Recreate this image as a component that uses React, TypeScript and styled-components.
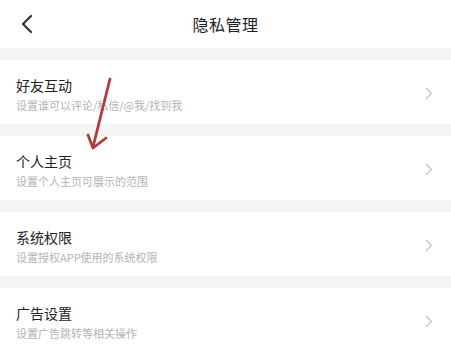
import React from 'react';
import styled, { createGlobalStyle } from 'styled-components';

const GlobalStyle = createGlobalStyle`
  html, body {
    margin: 0;
    padding: 0;
    background: #f5f5f5;
  }
  body {
    font-family: 'Noto Sans CJK SC', 'Noto Sans', sans-serif;
  }
`;

const Page = styled.div`
  position: relative;
  width: 451px;
  height: 347px;
  overflow: hidden;
  background: #f5f5f5;
`;

const Header = styled.header`
  height: 48px;
  background: #fff;
  display: grid;
  grid-template-columns: 60px 1fr 60px;
  align-items: center;
`;

const BackButton = styled.div`
  display: flex;
  align-items: center;
  padding-left: 20px;
  height: 48px;
`;

const Title = styled.h1`
  margin: 0;
  text-align: center;
  font-size: 16px;
  font-weight: 400;
  color: #222;
  letter-spacing: 0.5px;
`;

const List = styled.div`
  display: flex;
  flex-direction: column;
  gap: 12px;
  padding-top: 12px;
`;

const Item = styled.div`
  height: 64px;
  background: #fff;
  display: flex;
  align-items: flex-start;
  padding: 16px 16px 0 16px;
  box-sizing: border-box;
`;

const Texts = styled.div`
  flex: 1;
  display: flex;
  flex-direction: column;
`;

const ItemTitle = styled.div`
  font-size: 14px;
  line-height: 18px;
  color: #222;
`;

const ItemSub = styled.div`
  margin-top: 4px;
  font-size: 11px;
  line-height: 14px;
  color: #b4b4b4;
`;

const Chevron = styled.div`
  align-self: center;
  margin-top: -13px;
  margin-right: 2px;
  display: flex;
`;

const Annotation = styled.svg`
  position: absolute;
  left: 0;
  top: 0;
  pointer-events: none;
`;

const items = [
  { title: '好友互动', sub: '设置谁可以评论/私信/@我/找到我' },
  { title: '个人主页', sub: '设置个人主页可展示的范围' },
  { title: '系统权限', sub: '设置授权APP使用的系统权限' },
  { title: '广告设置', sub: '设置广告跳转等相关操作' },
];

const App = () => (
  <>
    <GlobalStyle />
    <Page>
      <Header>
        <BackButton>
          <svg width="14" height="20" viewBox="0 0 14 20">
            <path d="M11 2 L3 10 L11 18" fill="none" stroke="#333" strokeWidth="2.2" strokeLinecap="round" strokeLinejoin="round" />
          </svg>
        </BackButton>
        <Title>隐私管理</Title>
        <div />
      </Header>

      <List>
        {items.map((item) => (
          <Item key={item.title}>
            <Texts>
              <ItemTitle>{item.title}</ItemTitle>
              <ItemSub>{item.sub}</ItemSub>
            </Texts>
            <Chevron>
              <svg width="8" height="13" viewBox="0 0 8 13">
                <path d="M1.5 1.5 L6.5 6.5 L1.5 11.5" fill="none" stroke="#c2c2c2" strokeWidth="1.3" strokeLinecap="round" strokeLinejoin="round" />
              </svg>
            </Chevron>
          </Item>
        ))}
      </List>

      <Annotation width="451" height="347" viewBox="0 0 451 347">
        <g stroke="#b5383a" strokeWidth="2.8" strokeLinecap="round" fill="none">
          <path d="M110 79 L93 147" />
          <path d="M88 135 L93 148 L106 138" strokeLinejoin="round" />
        </g>
      </Annotation>
    </Page>
  </>
);

export default App;
